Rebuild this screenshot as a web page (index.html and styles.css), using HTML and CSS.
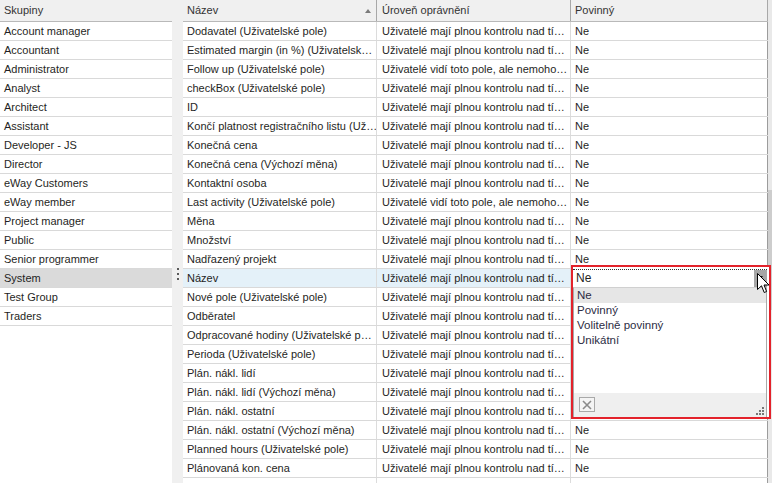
FILE: index.html
```html
<!DOCTYPE html>
<html lang="cs">
<head>
  <meta charset="UTF-8" />
  <title>Oprávnění polí</title>
  <link rel="stylesheet" href="styles.css">
</head>
<body>

<div class="window">

  <!-- Skupiny -->
  <div class="groups">
    <div class="head">Skupiny</div>
    <div class="item">Account manager</div>
    <div class="item">Accountant</div>
    <div class="item">Administrator</div>
    <div class="item">Analyst</div>
    <div class="item">Architect</div>
    <div class="item">Assistant</div>
    <div class="item">Developer - JS</div>
    <div class="item">Director</div>
    <div class="item">eWay Customers</div>
    <div class="item">eWay member</div>
    <div class="item">Project manager</div>
    <div class="item">Public</div>
    <div class="item">Senior programmer</div>
    <div class="item selected">System</div>
    <div class="item">Test Group</div>
    <div class="item">Traders</div>
  </div>

  <div class="splitter">
    <div class="grip"><i></i><i></i><i></i></div>
  </div>

  <!-- Pole -->
  <div class="grid">
    <div class="row head">
      <span class="sorted">Název <b class="arrow"></b></span>
      <span>Úroveň oprávnění</span>
      <span>Povinný</span>
    </div>
    <div class="row"><span>Dodavatel (Uživatelské pole)</span><span>Uživatelé mají plnou kontrolu nad tí…</span><span>Ne</span></div>
    <div class="row"><span>Estimated margin (in %) (Uživatelsk…</span><span>Uživatelé mají plnou kontrolu nad tí…</span><span>Ne</span></div>
    <div class="row"><span>Follow up (Uživatelské pole)</span><span>Uživatelé vidí toto pole, ale nemoho…</span><span>Ne</span></div>
    <div class="row"><span>checkBox (Uživatelské pole)</span><span>Uživatelé mají plnou kontrolu nad tí…</span><span>Ne</span></div>
    <div class="row"><span>ID</span><span>Uživatelé mají plnou kontrolu nad tí…</span><span>Ne</span></div>
    <div class="row"><span>Končí platnost registračního listu (Už…</span><span>Uživatelé mají plnou kontrolu nad tí…</span><span>Ne</span></div>
    <div class="row"><span>Konečná cena</span><span>Uživatelé mají plnou kontrolu nad tí…</span><span>Ne</span></div>
    <div class="row"><span>Konečná cena (Výchozí měna)</span><span>Uživatelé mají plnou kontrolu nad tí…</span><span>Ne</span></div>
    <div class="row"><span>Kontaktní osoba</span><span>Uživatelé mají plnou kontrolu nad tí…</span><span>Ne</span></div>
    <div class="row"><span>Last activity (Uživatelské pole)</span><span>Uživatelé vidí toto pole, ale nemoho…</span><span>Ne</span></div>
    <div class="row"><span>Měna</span><span>Uživatelé mají plnou kontrolu nad tí…</span><span>Ne</span></div>
    <div class="row"><span>Množství</span><span>Uživatelé mají plnou kontrolu nad tí…</span><span>Ne</span></div>
    <div class="row"><span>Nadřazený projekt</span><span>Uživatelé mají plnou kontrolu nad tí…</span><span>Ne</span></div>
    <div class="row selected"><span>Název</span><span>Uživatelé mají plnou kontrolu nad tí…</span><span></span></div>
    <div class="row"><span>Nové pole (Uživatelské pole)</span><span>Uživatelé mají plnou kontrolu nad tí…</span><span></span></div>
    <div class="row"><span>Odběratel</span><span>Uživatelé mají plnou kontrolu nad tí…</span><span></span></div>
    <div class="row"><span>Odpracované hodiny (Uživatelské p…</span><span>Uživatelé mají plnou kontrolu nad tí…</span><span></span></div>
    <div class="row"><span>Perioda (Uživatelské pole)</span><span>Uživatelé mají plnou kontrolu nad tí…</span><span></span></div>
    <div class="row"><span>Plán. nákl. lidí</span><span>Uživatelé mají plnou kontrolu nad tí…</span><span></span></div>
    <div class="row"><span>Plán. nákl. lidí (Výchozí měna)</span><span>Uživatelé mají plnou kontrolu nad tí…</span><span></span></div>
    <div class="row"><span>Plán. nákl. ostatní</span><span>Uživatelé mají plnou kontrolu nad tí…</span><span></span></div>
    <div class="row"><span>Plán. nákl. ostatní (Výchozí měna)</span><span>Uživatelé mají plnou kontrolu nad tí…</span><span>Ne</span></div>
    <div class="row"><span>Planned hours (Uživatelské pole)</span><span>Uživatelé mají plnou kontrolu nad tí…</span><span>Ne</span></div>
    <div class="row"><span>Plánovaná kon. cena</span><span>Uživatelé mají plnou kontrolu nad tí…</span><span>Ne</span></div>
    <div class="row"><span>Plánovaná kon. cena (Výchozí měna)</span><span>Uživatelé mají plnou kontrolu nad tí…</span><span>Ne</span></div>
  </div>

  <div class="vscroll"><div class="thumb"></div></div>

  <!-- Otevřený výběr "Povinný" -->
  <div class="dropdown">
    <div class="editor">
      <span class="value">Ne</span>
      <span class="button"><b></b></span>
    </div>
    <ul class="options">
      <li class="current">Ne</li>
      <li>Povinný</li>
      <li>Volitelně povinný</li>
      <li>Unikátní</li>
    </ul>
    <div class="footer">
      <span class="clear">
        <svg width="10" height="10" viewBox="0 0 10 10"><path d="M1 1 L9 9 M9 1 L1 9" stroke="#8a8a8a" stroke-width="1.6"/></svg>
      </span>
      <span class="resize"><i></i><i></i><i></i><i></i><i></i><i></i></span>
    </div>
    <svg class="cursor" width="13" height="21" viewBox="0 0 13 21">
      <path d="M0.5 0.5 L0.5 16.5 L4.5 12.8 L7.2 19.5 L9.6 18.5 L7 12 L12 12 Z" fill="#fff" stroke="#000" stroke-width="1"/>
    </svg>
  </div>

</div>

</body>
</html>
```

FILE: styles.css
```css
body {
  margin: 0;
  overflow: hidden;
  font-family: "Liberation Sans", Arial, sans-serif;
  font-size: 11px;
  color: #1f1f24;
  background: #fff;
}

.window {
  position: relative;
  display: flex;
  width: 772px;
  height: 483px;
  overflow: hidden;
}

/* left list */
.groups {
  width: 172px;
  flex: none;
  background: #fff;
}

.head {
  height: 21px;
  line-height: 21px;
  background: #f0f0f0;
  border-bottom: 1px solid #b9b9b9;
  color: #333;
}

.groups .head {
  padding-left: 4px;
}

.item {
  height: 18px;
  line-height: 18px;
  padding-left: 4px;
  border-bottom: 1px solid #d9d9d9;
  white-space: nowrap;
}

.item.selected {
  background: #dadada;
}

.splitter {
  width: 11px;
  flex: none;
  background: #f0f0f0;
}

.grip {
  display: flex;
  flex-direction: column;
  gap: 3px;
  margin: 268px 0 0 5px;
}

.grip i {
  width: 2px;
  height: 2px;
  background: #5a5a5a;
}

/* grid */
.grid {
  width: 585px;
  flex: none;
}

.row {
  display: grid;
  grid-template-columns: 194px 194px 197px;
  height: 18px;
  line-height: 18px;
  border-bottom: 1px solid #d9d9d9;
}

.row span {
  padding-left: 4px;
  border-right: 1px solid #dcdcdc;
  white-space: nowrap;
  overflow: hidden;
}

.row span + span {
  padding-left: 5px;
}

.row span:last-child {
  padding-left: 4px;
  border-right: 1px solid #9c9c9c;
}

.row.head {
  height: 21px;
  line-height: 21px;
  background: #f0f0f0;
  border-bottom: 1px solid #b9b9b9;
}

.row.head span {
  border-right-color: #a8a8a8;
}

.row.selected {
  background: #e4f1f9;
}

.sorted {
  position: relative;
}

.arrow {
  position: absolute;
  top: 9px;
  right: 5px;
  width: 0;
  height: 0;
  border-left: 3px solid transparent;
  border-right: 3px solid transparent;
  border-bottom: 4px solid #7a7a7a;
}

.vscroll {
  width: 4px;
  flex: none;
  background: #e9e9e9;
  padding-top: 190px;
}

.thumb {
  height: 120px;
  background: #cdcdcd;
}

/* dropdown editor */
.dropdown {
  position: absolute;
  left: 571px;
  top: 265px;
  width: 196px;
  height: 150px;
  border: 2px solid #e3222b;
  background: #fff;
}

.editor {
  display: flex;
  margin: 2px 2px 0 0;
  height: 17px;
  border-top: 1px dotted #333;
}

.value {
  flex: 1;
  line-height: 16px;
  padding-left: 3px;
  font-size: 12px;
}

.button {
  position: relative;
  width: 13px;
  background: #a6a6a6;
}

.button b {
  position: absolute;
  left: 3px;
  top: 6px;
  width: 0;
  height: 0;
  border-left: 3px solid transparent;
  border-right: 3px solid transparent;
  border-top: 4px solid #111;
}

.options {
  list-style: none;
  margin: 0 2px 0 0;
  padding: 0;
  height: 105px;
  border-left: 1px solid #a9a9a9;
  border-right: 1px solid #a9a9a9;
  border-top: 1px solid #d0d0d0;
}

.options li {
  height: 15px;
  line-height: 15px;
  padding-left: 3px;
  font-size: 11.5px;
  color: #2c2c44;
}

.options li.current {
  background: #e6e6e6;
}

.footer {
  position: relative;
  height: 24px;
  margin-right: 2px;
  background: #efefef;
  border-left: 1px solid #a9a9a9;
  border-right: 1px solid #a9a9a9;
}

.clear {
  position: absolute;
  left: 5px;
  top: 4px;
  width: 14px;
  height: 13px;
  border: 1px solid #a9a9a9;
  background: #f4f4f4;
  display: flex;
  align-items: center;
  justify-content: center;
}

.resize {
  position: absolute;
  right: 2px;
  bottom: 2px;
  width: 8px;
  height: 8px;
}

.resize i {
  position: absolute;
  width: 2px;
  height: 2px;
  background: #777;
}

.resize i:nth-child(1) { right: 0; bottom: 0; }
.resize i:nth-child(2) { right: 3px; bottom: 0; }
.resize i:nth-child(3) { right: 6px; bottom: 0; }
.resize i:nth-child(4) { right: 0; bottom: 3px; }
.resize i:nth-child(5) { right: 3px; bottom: 3px; }
.resize i:nth-child(6) { right: 0; bottom: 6px; }

.cursor {
  position: absolute;
  left: 184px;
  top: 6px;
}
```
